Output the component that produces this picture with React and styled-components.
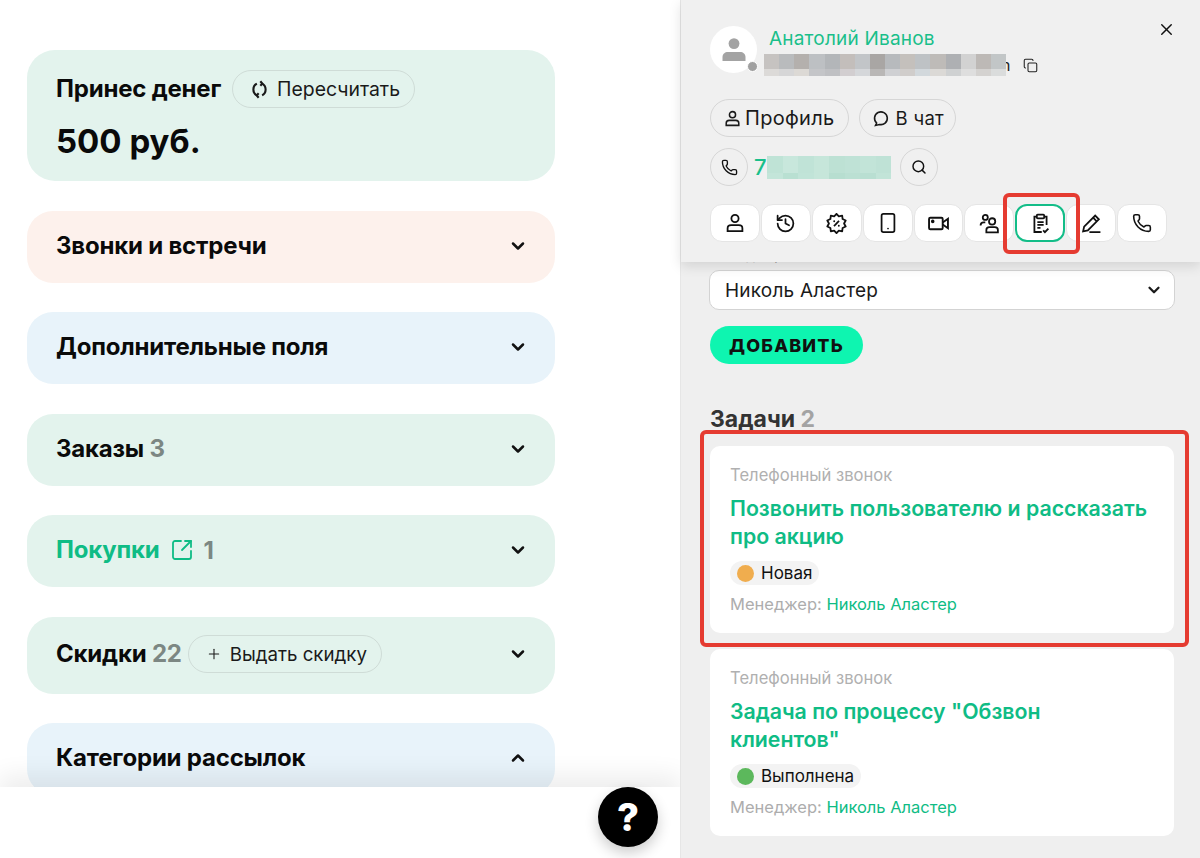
import React from "react";
import styled, { createGlobalStyle } from "styled-components";
import {
  ChevronDown,
  ChevronUp,
  Copy,
  History,
  Smartphone,
  Phone,
  Search,
  SquareArrowOutUpRight,
  X,
  Plus,
} from "lucide-react";

const GlobalStyle = createGlobalStyle`
  html, body { margin: 0; padding: 0; height: 100%; }
  body { font-family: Inter, "Noto Sans", sans-serif; color: #111; background: #fff; }
  * { box-sizing: border-box; }
`;

const UserIcon = ({ size = 20 }) => (
  <svg width={size} height={size} viewBox="0 0 20 20" fill="none" stroke="currentColor" strokeWidth="1.8">
    <circle cx="10" cy="5.5" r="3.6" />
    <path d="M2.6 15.5c0-2 1.5-3.3 3.5-3.3h7.8c2 0 3.5 1.3 3.5 3.3v2.6H2.6z" />
  </svg>
);

const badgePoints = Array.from({ length: 20 }, (_, i) => {
  const r = i % 2 ? 7.2 : 9.2;
  const a = (i * Math.PI) / 10;
  return `${(10 + r * Math.sin(a)).toFixed(2)},${(10 - r * Math.cos(a)).toFixed(2)}`;
}).join(" ");

const BadgeIcon = () => (
  <svg width="21" height="21" viewBox="0 0 20 20" fill="none" stroke="currentColor" strokeWidth="1.7" strokeLinejoin="round">
    <polygon points={badgePoints} />
    <path d="M12.4 7.6l-4.8 4.8" />
    <circle cx="7.8" cy="7.8" r=".9" fill="currentColor" stroke="none" />
    <circle cx="12.2" cy="12.2" r=".9" fill="currentColor" stroke="none" />
  </svg>
);

const VideoIcon = () => (
  <svg width="21" height="21" viewBox="0 0 20 20" fill="none" stroke="currentColor" strokeWidth="1.8">
    <rect x="1" y="4.5" width="13" height="11" rx="1.2" />
    <path d="M14 9l5-3.5v9L14 11" />
    <circle cx="4.5" cy="8" r=".8" fill="currentColor" />
  </svg>
);

const TeamIcon = () => (
  <svg width="21" height="21" viewBox="0 0 20 20" fill="none" stroke="currentColor" strokeWidth="1.7">
    <circle cx="6" cy="4.2" r="2.4" />
    <circle cx="12.5" cy="8" r="3" />
    <path d="M1.5 12c0-2 1.5-3 3-3h1.5M7 18.5v-2.3c0-1.7 1.3-2.7 3-2.7h5c1.7 0 3 1 3 2.7v2.3z" />
  </svg>
);

const TaskIcon = () => (
  <svg width="21" height="21" viewBox="0 0 20 20" fill="none" stroke="currentColor" strokeWidth="1.7">
    <path d="M6.5 3.5H4.2v14.6h7M13.5 3.5h2.3v8" />
    <rect x="6.5" y="1.6" width="7" height="3.6" rx=".8" />
    <path d="M7 8.6h6M7 11.4h6M7 14.2h3" />
    <path d="M12.5 16.6l1.7 1.7 3.3-3.5" />
  </svg>
);

const PenIcon = () => (
  <svg width="21" height="21" viewBox="0 0 20 20" fill="none" stroke="currentColor" strokeWidth="1.7">
    <path d="M2 17.5l1-4.5L13.5 2.5l3.5 3.5L6.5 16.5z" />
    <path d="M11.5 4.5l3.5 3.5M8 18.2h10.5" />
  </svg>
);

const ChatIcon = () => (
  <svg width="17" height="17" viewBox="0 0 16 16" fill="none" stroke="currentColor" strokeWidth="1.5">
    <path d="M3.4 12.2A6 6 0 1 1 6 13.6l-3.6.9z" />
  </svg>
);

const RefreshIcon = () => (
  <svg width="19" height="19" viewBox="0 0 18 18" fill="none" stroke="currentColor" strokeWidth="2">
    <path d="M6.5 3.4A6.4 6.4 0 0 0 6.5 14.6" />
    <path d="M11.5 3.4a6.4 6.4 0 0 1 0 11.2" />
    <path d="M9.8 1.2L11.6 3.4 9.8 5.4M8.2 12.6L6.4 14.6l1.8 2.2" />
  </svg>
);

const AvatarGlyph = () => (
  <svg width="32" height="32" viewBox="0 0 32 32" fill="#a3a3a3">
    <circle cx="16" cy="9.6" r="5.4" />
    <path d="M4.5 27v-4c0-3 2.4-5 5.4-5h12.2c3 0 5.4 2 5.4 5v4z" />
  </svg>
);

const nameRowTop = ["#c6c3c1", "#b9bbbd", "#b4b0ad", "#bdc0c3", "#b3b6b9", "#c3bebb", "#c2c5c8", "#a9a6a4", "#b7babd", "#c4c0bc", "#bec2c5", "#bebbb8", "#aeb0b3", "#d2d2d2", "#bdb9b6", "#c2c6c7"];
const nameRowBottom = ["#dcdad8", "#d6d6d7", "#dcd9d5", "#c4c5c8", "#bfc0c3", "#d2ced0", "#d5d7da", "#b9b7b6", "#cfd0d3", "#d0cdcb", "#d2d8dc", "#dbd9d6", "#cfd1d2", "#dedede", "#d4d2d0", "#dadcdc"];
const phoneRowTop = ["#bfe3d6", "#c8e7dc", "#c0e3d7", "#c6e6da", "#bde1d4", "#bfe2d6", "#c2e4d8", "#bfe2d6"];
const phoneRowBottom = ["#c3e5d9", "#b9e0d2", "#c1e4d8", "#c6e6da", "#b7ded0", "#bbe0d3", "#b9dfd2", "#c2e4d8"];

const blocks = [
  { title: "Звонки и встречи", tone: "peach" },
  { title: "Дополнительные поля", tone: "blue" },
  { title: "Заказы", count: "3", tone: "green" },
];

const tools = [
  { key: "user", icon: <UserIcon /> },
  { key: "history", icon: <History size={21} strokeWidth={2} /> },
  { key: "percent", icon: <BadgeIcon /> },
  { key: "phone", icon: <Smartphone size={22} strokeWidth={1.9} /> },
  { key: "video", icon: <VideoIcon /> },
  { key: "team", icon: <TeamIcon /> },
  { key: "tasks", icon: <TaskIcon />, active: true },
  { key: "pen", icon: <PenIcon /> },
  { key: "call", icon: <Phone size={20} strokeWidth={1.9} /> },
];

const tasks = [
  {
    title: "Позвонить пользователю и рассказать про акцию",
    status: "Новая",
    dot: "#f0ad4e",
  },
  {
    title: 'Задача по процессу "Обзвон клиентов"',
    status: "Выполнена",
    dot: "#5cb85c",
  },
];

export default function App() {
  return (
    <Page>
      <GlobalStyle />
      <LeftColumn>
        <MoneyCard>
          <TitleRow>
            <BlockTitle>Принес денег</BlockTitle>
            <OutlinePill>
              <RefreshIcon />
              Пересчитать
            </OutlinePill>
          </TitleRow>
          <Amount>500 руб.</Amount>
        </MoneyCard>
        {blocks.map((block) => (
          <Block key={block.title} $tone={block.tone}>
            <TitleRow>
              <BlockTitle>
                {block.title}
                {block.count && <Count> {block.count}</Count>}
              </BlockTitle>
            </TitleRow>
            <ChevronDown size={20} strokeWidth={3} />
          </Block>
        ))}
        <Block $tone="green">
          <TitleRow>
            <BlockTitle $link>Покупки</BlockTitle>
            <LinkIcon>
              <SquareArrowOutUpRight size={24} strokeWidth={1.8} />
            </LinkIcon>
            <Count>1</Count>
          </TitleRow>
          <ChevronDown size={20} strokeWidth={3} />
        </Block>
        <Block $tone="green" $tall>
          <TitleRow>
            <BlockTitle>
              Скидки <Count>22</Count>
            </BlockTitle>
            <OutlinePill $compact>
              <Plus size={16} strokeWidth={1.6} />
              Выдать скидку
            </OutlinePill>
          </TitleRow>
          <ChevronDown size={20} strokeWidth={3} />
        </Block>
        <Block $tone="blue">
          <TitleRow>
            <BlockTitle>Категории рассылок</BlockTitle>
          </TitleRow>
          <ChevronUp size={20} strokeWidth={3} />
        </Block>
        <BottomBar />
        <HelpButton>?</HelpButton>
      </LeftColumn>

      <RightColumn>
        <Header>
          <CloseButton>
            <X size={19} strokeWidth={1.8} />
          </CloseButton>
          <Person>
            <Avatar>
              <AvatarGlyph />
              <StatusDot />
            </Avatar>
            <PersonText>
              <PersonName>Анатолий Иванов</PersonName>
              <EmailRow>
                <NameMosaic>
                  <MosaicRow $height={15}>
                    {nameRowTop.map((color, i) => (
                      <MosaicCell key={i} $color={color} />
                    ))}
                  </MosaicRow>
                  <MosaicRow $height={7}>
                    {nameRowBottom.map((color, i) => (
                      <MosaicCell key={i} $color={color} />
                    ))}
                  </MosaicRow>
                </NameMosaic>
                <EmailTail>n</EmailTail>
                <Copy size={15} strokeWidth={1.7} />
              </EmailRow>
            </PersonText>
          </Person>
          <PillRow>
            <HeaderPill>
              <UserIcon size={17} />
              Профиль
            </HeaderPill>
            <HeaderPill $short>
              <ChatIcon />
              В чат
            </HeaderPill>
          </PillRow>
          <PhoneRow>
            <RoundButton>
              <Phone size={17} strokeWidth={1.9} />
            </RoundButton>
            <PhoneNumber>7</PhoneNumber>
            <PhoneMosaic>
              <MosaicRow $height={17}>
                {phoneRowTop.map((color, i) => (
                  <MosaicCell key={i} $color={color} />
                ))}
              </MosaicRow>
              <MosaicRow $height={6}>
                {phoneRowBottom.map((color, i) => (
                  <MosaicCell key={i} $color={color} />
                ))}
              </MosaicRow>
            </PhoneMosaic>
            <RoundButton>
              <Search size={16} strokeWidth={2.2} />
            </RoundButton>
          </PhoneRow>
          <Toolbar>
            {tools.map((tool) => (
              <ToolButton key={tool.key} $active={tool.active}>
                {tool.icon}
              </ToolButton>
            ))}
          </Toolbar>
          <Highlight $top={193} $left={322} $width={77} $height={61} />
        </Header>

        <PanelBody>
          <FieldLabel>Менеджер</FieldLabel>
          <SelectBox>
            Николь Аластер
            <ChevronDown size={18} strokeWidth={3} />
          </SelectBox>
          <AddButton>ДОБАВИТЬ</AddButton>
          <TasksTitle>
            Задачи <TasksCount>2</TasksCount>
          </TasksTitle>
          <TaskList>
            {tasks.map((task) => (
              <TaskCard key={task.title}>
                <TaskType>Телефонный звонок</TaskType>
                <TaskTitle>{task.title}</TaskTitle>
                <StatusChip>
                  <ChipDot $color={task.dot} />
                  {task.status}
                </StatusChip>
                <ManagerLine>
                  Менеджер: <ManagerName>Николь Аластер</ManagerName>
                </ManagerLine>
              </TaskCard>
            ))}
          </TaskList>
          <Highlight $top={430} $left={19} $width={489} $height={217} />
        </PanelBody>
      </RightColumn>
    </Page>
  );
}

const toneColors = { green: "#e3f3ed", peach: "#fdf1ec", blue: "#e8f3fa" };

const Page = styled.div`
  display: flex;
  width: 100%;
  height: 858px;
  overflow: hidden;
`;

const LeftColumn = styled.div`
  position: relative;
  width: 680px;
  flex: none;
  padding: 50px 125px 0 27px;
  display: flex;
  flex-direction: column;
  gap: 29.5px;
  overflow: hidden;
`;

const MoneyCard = styled.section`
  flex: none;
  height: 131px;
  padding: 20px 29px;
  border-radius: 28px;
  background: #e3f3ed;
`;

const Block = styled.section`
  flex: none;
  height: ${(p) => (p.$tall ? "77px" : "72px")};
  padding: 0 27px 2px 29px;
  border-radius: 26px;
  background: ${(p) => toneColors[p.$tone]};
  display: flex;
  align-items: center;
  justify-content: space-between;
  color: #111;
`;

const TitleRow = styled.div`
  display: flex;
  align-items: center;
  gap: 10px;
`;

const BlockTitle = styled.h3`
  margin: 0;
  font-size: 24px;
  line-height: 30px;
  font-weight: 700;
  letter-spacing: -0.2px;
  color: ${(p) => (p.$link ? "#0fbc85" : "#0a0a0a")};
`;

const Count = styled.span`
  font-size: 24px;
  font-weight: 700;
  color: #7c8783;
`;

const LinkIcon = styled.span`
  display: flex;
  color: #0fbc85;
`;

const OutlinePill = styled.button`
  height: 38px;
  margin-left: ${(p) => (p.$compact ? "-4px" : "1px")};
  padding: 0 14px 0 17px;
  display: flex;
  align-items: center;
  gap: 8px;
  border: 1.5px solid #cfdcd7;
  border-radius: 19px;
  background: transparent;
  font: 400 ${(p) => (p.$compact ? "18.7px" : "19.4px")} Inter, sans-serif;
  color: #1a1a1a;
`;

const Amount = styled.div`
  margin-top: 13px;
  font-size: 33px;
  line-height: 40px;
  font-weight: 700;
  color: #0a0a0a;
`;

const BottomBar = styled.div`
  position: absolute;
  left: 0;
  right: 0;
  bottom: 0;
  height: 71px;
  background: #fff;
  box-shadow: 0 -12px 24px rgba(0, 0, 0, 0.07);
`;

const HelpButton = styled.button`
  position: absolute;
  left: 598px;
  top: 787px;
  width: 60px;
  height: 60px;
  border: none;
  border-radius: 50%;
  background: #000;
  color: #fff;
  font: 800 38px Inter, sans-serif;
  box-shadow: 0 6px 14px rgba(0, 0, 0, 0.2);
`;

const RightColumn = styled.div`
  position: relative;
  flex: 1;
  min-width: 0;
  background: #efefef;
  border-left: 1px solid #e6e6e6;
`;

const Header = styled.header`
  position: relative;
  z-index: 2;
  height: 262px;
  padding: 26px 29px 0 29px;
  background: #f0f0f0;
  box-shadow: 0 4px 12px rgba(0, 0, 0, 0.12);
`;

const CloseButton = styled.span`
  position: absolute;
  top: 20px;
  right: 24px;
  display: flex;
  color: #111;
`;

const Person = styled.div`
  display: flex;
  gap: 12px;
`;

const Avatar = styled.div`
  position: relative;
  width: 47px;
  height: 47px;
  flex: none;
  border-radius: 50%;
  background: #fff;
  display: flex;
  align-items: center;
  justify-content: center;
`;

const StatusDot = styled.span`
  position: absolute;
  right: -1px;
  bottom: 1px;
  width: 11px;
  height: 11px;
  border-radius: 50%;
  border: 1.5px solid #fff;
  background: #a0a0a0;
`;

const PersonText = styled.div`
  margin-left: -3px;
  padding-top: 2px;
`;

const PersonName = styled.div`
  margin-left: 3px;
  font-size: 19px;
  line-height: 22px;
  color: #19bf8a;
  letter-spacing: 0.2px;
`;

const EmailRow = styled.div`
  margin-top: 4px;
  display: flex;
  align-items: center;
  color: #222;
`;

const NameMosaic = styled.div`
  position: relative;
  z-index: 1;
  width: 242px;
  margin-left: -2px;
`;

const PhoneMosaic = styled.div`
  width: 124px;
  margin-right: 9px;
`;

const MosaicRow = styled.div`
  display: flex;
  height: ${(p) => p.$height}px;
`;

const MosaicCell = styled.span`
  flex: 1;
  background: ${(p) => p.$color};
`;

const EmailTail = styled.span`
  margin: 0 13px 0 -5px;
  font-size: 16px;
  line-height: 16px;
`;

const PillRow = styled.div`
  margin-top: 23px;
  display: flex;
  gap: 10px;
`;

const HeaderPill = styled.button`
  height: 38px;
  padding: 0 ${(p) => (p.$short ? "11px" : "13px")} 0 13px;
  display: flex;
  align-items: center;
  gap: ${(p) => (p.$short ? "6px" : "4px")};
  border: 1.5px solid #d6d6d6;
  border-radius: 19px;
  background: transparent;
  font: 400 ${(p) => (p.$short ? "18.5px" : "20px")} Inter, sans-serif;
  letter-spacing: 0.3px;
  color: #1a1a1a;
`;

const PhoneRow = styled.div`
  margin-top: 11px;
  display: flex;
  align-items: center;
`;

const RoundButton = styled.button`
  width: 38px;
  height: 38px;
  flex: none;
  padding: 0;
  display: flex;
  align-items: center;
  justify-content: center;
  border: 1.5px solid #d6d6d6;
  border-radius: 50%;
  background: transparent;
  color: #111;
`;

const PhoneNumber = styled.span`
  margin-left: 6px;
  width: 13px;
  font-size: 22px;
  font-weight: 500;
  color: #19bf8a;
`;

const Toolbar = styled.div`
  margin-top: 18px;
  display: flex;
  gap: 1px;
`;

const ToolButton = styled.button`
  width: 49.9px;
  height: 38px;
  padding: 0;
  display: flex;
  align-items: center;
  justify-content: center;
  border: ${(p) => (p.$active ? "2px solid #13bd88" : "1.5px solid #e5e5e5")};
  border-radius: 12px;
  background: #fff;
  color: #111;
`;

const Highlight = styled.div`
  position: absolute;
  top: ${(p) => p.$top}px;
  left: ${(p) => p.$left}px;
  width: ${(p) => p.$width}px;
  height: ${(p) => p.$height}px;
  border: 4px solid #e53b31;
  border-radius: 6px;
  pointer-events: none;
  z-index: 3;
`;

const PanelBody = styled.div`
  padding: 0 25px 0 28px;
`;

const FieldLabel = styled.div`
  margin-top: -16px;
  height: 24px;
  font-size: 14px;
  line-height: 18px;
  color: #888;
`;

const SelectBox = styled.div`
  height: 40px;
  padding: 0 11px 0 15px;
  display: flex;
  align-items: center;
  justify-content: space-between;
  border: 1px solid #d3d3d3;
  border-radius: 10px;
  background: #fff;
  font-size: 19px;
  letter-spacing: 0.2px;
  color: #1a1a1a;
`;

const AddButton = styled.button`
  margin: 16px 0 0 1px;
  width: 153px;
  height: 38px;
  display: block;
  border: none;
  border-radius: 19px;
  background: #0ef5b0;
  font: 800 18px Inter, sans-serif;
  letter-spacing: 1.2px;
  color: #111;
`;

const TasksTitle = styled.h2`
  margin: 41px 0 0 1px;
  font-size: 23px;
  line-height: 28px;
  font-weight: 700;
  color: #333;
`;

const TasksCount = styled.span`
  color: #a3a3a3;
`;

const TaskList = styled.div`
  margin: 13px 1px 0 1px;
  display: flex;
  flex-direction: column;
  gap: 16px;
`;

const TaskCard = styled.article`
  height: 187px;
  padding: 17px 24px 0 20px;
  border-radius: 10px;
  background: #fff;
`;

const TaskType = styled.div`
  font-size: 16.6px;
  line-height: 24px;
  color: #b0b0b0;
`;

const TaskTitle = styled.div`
  margin-top: 7px;
  font-size: 21.3px;
  line-height: 28px;
  font-weight: 600;
  color: #0fbc85;
`;

const StatusChip = styled.div`
  margin-top: 11px;
  width: fit-content;
  height: 24px;
  padding: 0 7px;
  display: flex;
  align-items: center;
  gap: 7px;
  border-radius: 12px;
  background: #f3f3f3;
  font-size: 17px;
  color: #111;
`;

const ChipDot = styled.span`
  width: 17px;
  height: 17px;
  border-radius: 50%;
  background: ${(p) => p.$color};
`;

const ManagerLine = styled.div`
  margin-top: 7px;
  font-size: 16.5px;
  line-height: 24px;
  color: #adadad;
`;

const ManagerName = styled.span`
  color: #0fbc85;
`;
